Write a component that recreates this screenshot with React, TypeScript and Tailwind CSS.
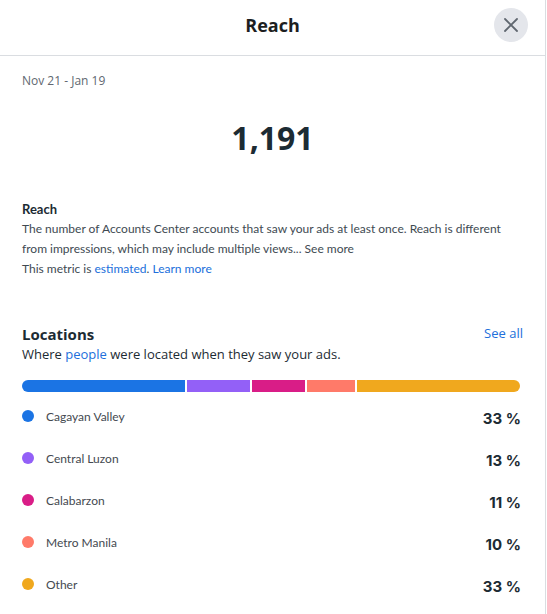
import React from "react";

const locations = [
  { name: "Cagayan Valley", pct: 33, color: "bg-[#1b74e4]" },
  { name: "Central Luzon", pct: 13, color: "bg-[#9360f7]" },
  { name: "Calabarzon", pct: 11, color: "bg-[#d91d87]" },
  { name: "Metro Manila", pct: 10, color: "bg-[#ff7a69]" },
  { name: "Other", pct: 33, color: "bg-[#f0a81e]" },
];

export default function App() {
  return (
    <div className="w-[547px] h-[614px] bg-white overflow-hidden font-['Open_Sans',sans-serif] text-[#1c2b33]">
      <div className="w-[546px] h-full border-r border-[#dadde1]">
        {/* Header */}
        <div className="relative h-[56px] border-b border-[#dadde1] flex items-center justify-center">
          <h1 className="text-[18px] font-bold text-[#1c1e21] -mt-[4px]">Reach</h1>
          <button className="absolute right-[17px] top-[8px] w-[34px] h-[34px] rounded-full bg-[#e4e6eb] flex items-center justify-center">
            <svg width="16" height="16" viewBox="0 0 16 16">
              <path d="M2 2 L14 14 M14 2 L2 14" stroke="#606770" strokeWidth="1.8" strokeLinecap="round" />
            </svg>
          </button>
        </div>

        <div className="px-[22px]">
          <div className="pt-[16px] text-[12px] text-[#606770]">Nov 21 - Jan 19</div>

          <div className="mt-[28px] text-center text-[32px] font-bold leading-[40px] font-['Open_Sans',sans-serif]">
            1,191
          </div>

          {/* Reach description */}
          <div className="mt-[41px] font-['Lato',sans-serif] text-[12px] leading-[20px]">
            <div className="text-[13px] font-bold">Reach</div>
            <p className="text-[#3e4a52]">
              The number of Accounts Center accounts that saw your ads at least once. Reach is different
              from impressions, which may include multiple views... See more
            </p>
            <p className="text-[#3e4a52]">
              This metric is <span className="text-[#216fdb]">estimated</span>.{" "}
              <span className="text-[#216fdb]">Learn more</span>
            </p>
          </div>

          {/* Locations */}
          <div className="mt-[45px]">
            <div className="flex items-center justify-between">
              <h2 className="text-[15px] font-bold leading-[20px]">Locations</h2>
              <span className="text-[13px] text-[#216fdb]">See all</span>
            </div>
            <p className="text-[13px] leading-[20px] text-[#1c2b33]">
              Where <span className="text-[#216fdb]">people</span> were located when they saw your ads.
            </p>

            <div className="mt-[16px] flex h-[12px] gap-[2px] w-[498px]">
              <div className="w-[163px] bg-[#1b74e4] rounded-l-full" />
              <div className="w-[63px] bg-[#9360f7]" />
              <div className="w-[53px] bg-[#d91d87]" />
              <div className="w-[48px] bg-[#ff7a69]" />
              <div className="flex-1 bg-[#f0a81e] rounded-r-full" />
            </div>

            <div className="mt-[17px] w-[499px]">
              {locations.map((l) => (
                <div key={l.name} className="flex items-start justify-between h-[42px]">
                  <div className="flex items-center gap-[12px]">
                    <span className={`w-[12px] h-[12px] rounded-full ${l.color} -mt-[3px]`} />
                    <span className="text-[12px] leading-[16px] text-[#444950] font-['Lato',sans-serif]">{l.name}</span>
                  </div>
                  <span className="text-[15px] font-bold leading-[20px] font-['Inter',sans-serif]">{l.pct} %</span>
                </div>
              ))}
            </div>
          </div>
        </div>
      </div>
    </div>
  );
}
